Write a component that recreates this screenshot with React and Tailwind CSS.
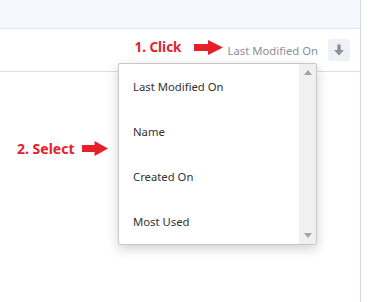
import React from "react";

function RedArrow({ w = 29, h = 15 }) {
  return (
    <svg width={w} height={h} viewBox="0 0 29 15" preserveAspectRatio="none" className="block">
      <polygon points="0,4 14,4 14,0 29,7.5 14,15 14,11 0,11" fill="#e5202a" />
    </svg>
  );
}

function DownIcon() {
  return (
    <svg width="10" height="12" viewBox="0 0 10 12" className="block">
      <rect x="3.3" y="0.5" width="3.4" height="6" fill="#8b9099" />
      <polygon points="0,6 10,6 5,11.5" fill="#8b9099" />
    </svg>
  );
}

const items = ["Last Modified On", "Name", "Created On", "Most Used"];

export default function App() {
  return (
    <div
      className="relative w-[384px] h-[302px] bg-white flex overflow-hidden"
      style={{ fontFamily: '"Noto Sans", "Open Sans", sans-serif' }}
    >
      <div className="w-[361px] h-full border-r border-[#d3dae3] flex flex-col">
        <div className="h-[29px] bg-[#f5f9fd] border-b border-[#d9e1ea]" />
        <div className="h-[43px] border-b border-[#dadfe6] flex items-center justify-end pr-[10px]">
          <div className="flex items-center mb-[6px]">
            <span className="text-[13.5px] leading-[19px] font-bold text-[#e5202a]">1. Click</span>
            <span className="ml-[12px]">
              <RedArrow />
            </span>
          </div>
          <span className="ml-[5px] mt-[2px] text-[11.3px] leading-[16px] text-[#8b9099]">Last Modified On</span>
          <button className="ml-[10px] w-[22px] h-[22px] rounded-[3px] bg-[#eef1f5] flex items-center justify-center">
            <DownIcon />
          </button>
        </div>
        <div className="flex items-center pl-[17px] mt-[67px] h-[19px]">
          <span className="text-[14px] leading-[19px] font-bold text-[#e5202a]">2. Select</span>
          <span className="ml-[8px]">
            <RedArrow w={26} h={15} />
          </span>
        </div>
      </div>

      <div className="absolute left-[118px] top-[63px] w-[199px] h-[182px] bg-white border border-[#c8c8c8] rounded-[2px] shadow-[0_4px_12px_rgba(0,0,0,0.18)] flex">
        <div className="flex-1 flex flex-col pt-[1px]">
          {items.map((t) => (
            <div key={t} className="h-[45px] shrink-0 flex items-center pl-[14px] text-[11.3px] text-[#333333]">
              {t}
            </div>
          ))}
        </div>
        <div className="w-[17px] bg-[#f0f0f0] flex flex-col justify-between">
          <div className="h-[17px] flex items-center justify-center">
            <svg width="8" height="5" viewBox="0 0 8 5" className="block">
              <polygon points="0,5 8,5 4,0" fill="#a3a3a3" />
            </svg>
          </div>
          <div className="h-[17px] flex items-center justify-center">
            <svg width="8" height="5" viewBox="0 0 8 5" className="block">
              <polygon points="0,0 8,0 4,5" fill="#a3a3a3" />
            </svg>
          </div>
        </div>
      </div>
    </div>
  );
}
